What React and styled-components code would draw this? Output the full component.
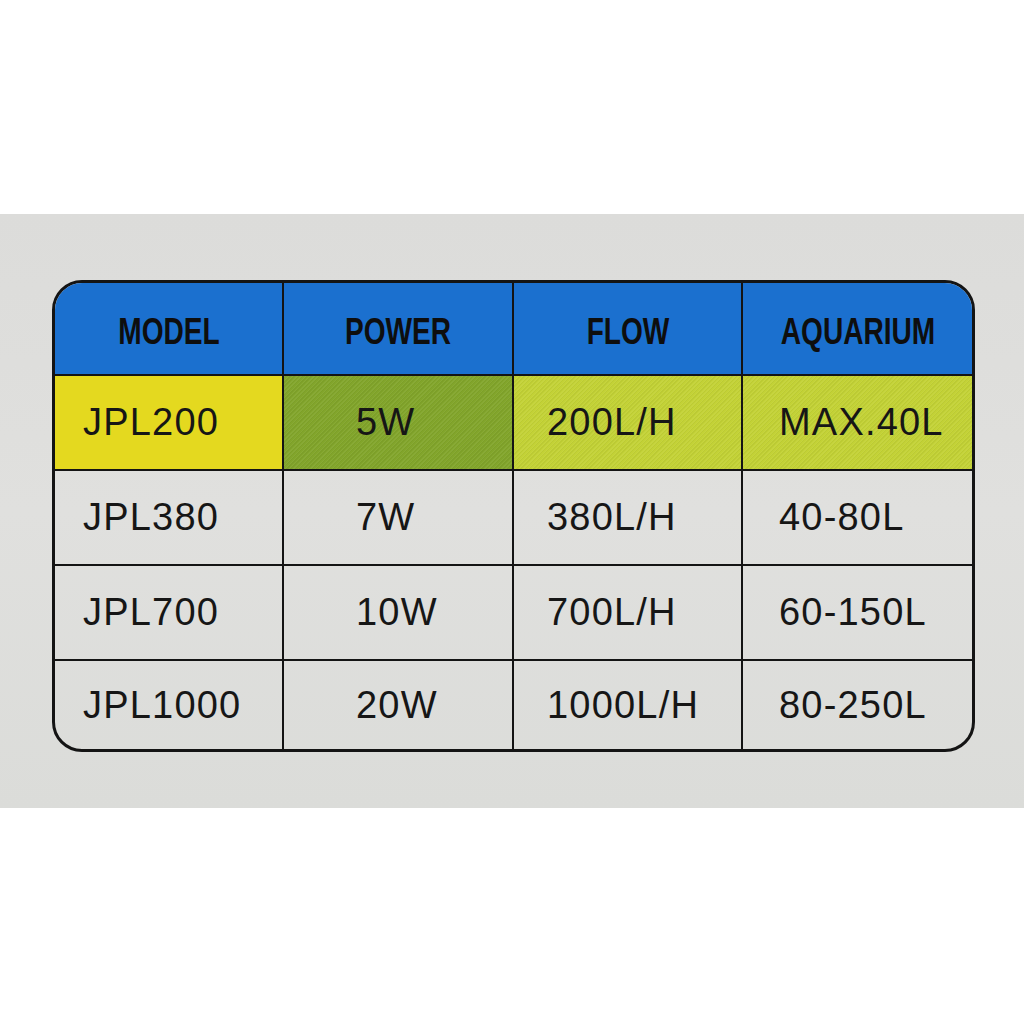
import React from "react";
import styled, { createGlobalStyle } from "styled-components";

const GlobalStyle = createGlobalStyle`
  html, body {
    margin: 0;
    padding: 0;
    background: #ffffff;
  }
  body {
    font-family: "Liberation Sans", Arial, sans-serif;
  }
`;

// table data, with the fill of each first-row cell
const columns = [
  { title: "MODEL", pad: 28 },
  { title: "POWER", pad: 72 },
  { title: "FLOW", pad: 33 },
  { title: "AQUARIUM", pad: 36 },
];

const rows = [
  { cells: ["JPL200", "5W", "200L/H", "MAX.40L"], fills: ["yellow", "green", "lime", "lime"] },
  { cells: ["JPL380", "7W", "380L/H", "40-80L"] },
  { cells: ["JPL700", "10W", "700L/H", "60-150L"] },
  { cells: ["JPL1000", "20W", "1000L/H", "80-250L"] },
];

const fillColors = {
  yellow: "#e4d91f",
  green: "#82a52b",
  lime: "#c3d236",
};

const Page = styled.div`
  width: 1024px;
  height: 1024px;
  display: flex;
  flex-direction: column;
  background: #ffffff;
`;

const Band = styled.div`
  margin-top: 214px;
  height: 594px;
  box-sizing: border-box;
  padding: 66px 0 0 52px;
  background: linear-gradient(180deg, #dcdcda 0%, #e0e0de 50%, #dbdcd9 100%);
`;

const Table = styled.div`
  width: 923px;
  box-sizing: border-box;
  border: 3px solid #141414;
  border-radius: 30px;
  overflow: hidden;
  display: grid;
  grid-template-columns: 229px 230px 229px 1fr;
  grid-template-rows: 93px 95px 95px 95px 1fr;
  height: 472px;
`;

const HeadCell = styled.div`
  background: #1b70cf;
  display: flex;
  align-items: center;
  justify-content: center;
  border-right: ${(p) => (p.$last ? "none" : "2px solid #141414")};
  border-bottom: 2px solid #141414;
  padding-top: 6px;
  box-sizing: border-box;
`;

// the header lettering is a narrow, heavy grotesque
const HeadText = styled.span`
  display: inline-block;
  font-family: "Liberation Sans", Arial, sans-serif;
  font-weight: 700;
  font-size: 36px;
  color: #0e0e0e;
  transform: scaleX(0.78);
  white-space: nowrap;
`;

const Cell = styled.div`
  display: flex;
  align-items: center;
  padding-left: ${(p) => p.$pad}px;
  box-sizing: border-box;
  border-right: ${(p) => (p.$last ? "none" : "2px solid #141414")};
  border-bottom: ${(p) => (p.$bottom ? "none" : "2px solid #141414")};
  background-color: ${(p) => (p.$fill ? fillColors[p.$fill] : "transparent")};
  background-image: ${(p) =>
    p.$fill && p.$fill !== "yellow"
      ? "repeating-linear-gradient(135deg, rgba(255,255,255,0.05) 0 1px, rgba(0,0,0,0.04) 1px 2px, transparent 2px 3px)"
      : "none"};
  font-family: "Liberation Sans", Arial, sans-serif;
  font-size: 38px;
  letter-spacing: 1.2px;
  color: #161616;
`;

export default function App() {
  return (
    <>
      <GlobalStyle />
      <Page>
        <Band>
          <Table>
            {columns.map((c, i) => (
              <HeadCell key={c.title} $last={i === columns.length - 1}>
                <HeadText>{c.title}</HeadText>
              </HeadCell>
            ))}
            {rows.map((row, r) =>
              row.cells.map((text, i) => (
                <Cell
                  key={`${r}-${i}`}
                  $pad={columns[i].pad}
                  $last={i === columns.length - 1}
                  $bottom={r === rows.length - 1}
                  $fill={row.fills ? row.fills[i] : null}
                >
                  {text}
                </Cell>
              ))
            )}
          </Table>
        </Band>
      </Page>
    </>
  );
}
